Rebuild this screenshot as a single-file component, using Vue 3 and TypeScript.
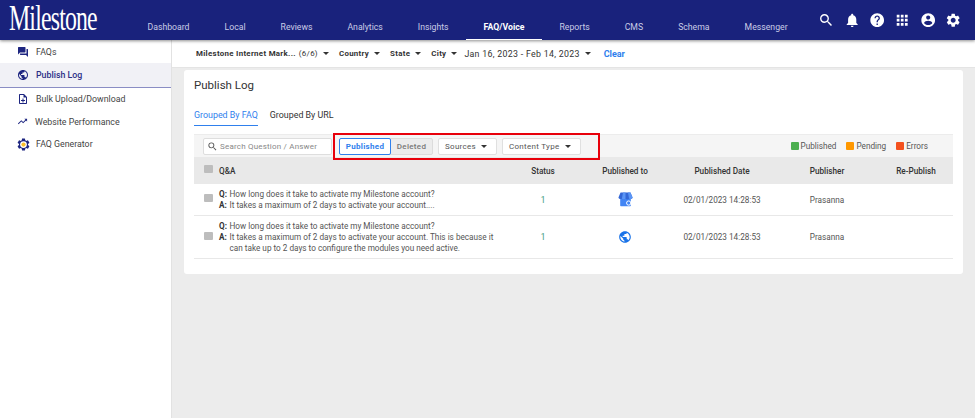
<script setup lang="ts">
const navItems = ['Dashboard', 'Local', 'Reviews', 'Analytics', 'Insights', 'FAQ/Voice', 'Reports', 'CMS', 'Schema', 'Messenger'];
const activeNav = 'FAQ/Voice';

const headerIcons = [
  'M15.5 14h-.79l-.28-.27A6.47 6.47 0 0 0 16 9.5 6.5 6.5 0 1 0 9.5 16c1.61 0 3.09-.59 4.23-1.57l.27.28v.79l5 4.99L20.49 19l-4.99-5zm-6 0C7.01 14 5 11.99 5 9.5S7.01 5 9.5 5 14 7.01 14 9.5 11.99 14 9.5 14z',
  'M12 22c1.1 0 2-.9 2-2h-4c0 1.1.9 2 2 2zm6-6v-5c0-3.07-1.63-5.64-4.5-6.32V4c0-.83-.67-1.5-1.5-1.5s-1.5.67-1.5 1.5v.68C7.64 5.36 6 7.92 6 11v5l-2 2v1h16v-1l-2-2z',
  'M12 2C6.48 2 2 6.48 2 12s4.48 10 10 10 10-4.48 10-10S17.52 2 12 2zm1 17h-2v-2h2v2zm2.07-7.75l-.9.92C13.45 12.9 13 13.5 13 15h-2v-.5c0-1.1.45-2.1 1.17-2.83l1.24-1.26c.37-.36.59-.86.59-1.41 0-1.1-.9-2-2-2s-2 .9-2 2H8c0-2.21 1.79-4 4-4s4 1.79 4 4c0 .88-.36 1.68-.93 2.25z',
  'M4 8h4V4H4v4zm6 12h4v-4h-4v4zm-6 0h4v-4H4v4zm0-6h4v-4H4v4zm6 0h4v-4h-4v4zm6-10v4h4V4h-4zm-6 4h4V4h-4v4zm6 6h4v-4h-4v4zm0 6h4v-4h-4v4z',
  'M12 2C6.48 2 2 6.48 2 12s4.48 10 10 10 10-4.48 10-10S17.52 2 12 2zm0 3c1.66 0 3 1.34 3 3s-1.34 3-3 3-3-1.34-3-3 1.34-3 3-3zm0 14.2c-2.5 0-4.71-1.28-6-3.22.03-1.99 4-3.08 6-3.08 1.99 0 5.97 1.09 6 3.08-1.29 1.94-3.5 3.22-6 3.22z',
  'M19.14 12.94c.04-.3.06-.61.06-.94 0-.32-.02-.64-.07-.94l2.03-1.58a.49.49 0 0 0 .12-.61l-1.92-3.32a.488.488 0 0 0-.59-.22l-2.39.96c-.5-.38-1.03-.7-1.62-.94l-.36-2.54a.484.484 0 0 0-.48-.41h-3.84c-.24 0-.43.17-.47.41l-.36 2.54c-.59.24-1.13.57-1.62.94l-2.39-.96c-.22-.08-.47 0-.59.22L2.74 8.87c-.12.21-.08.47.12.61l2.03 1.58c-.05.3-.09.63-.09.94s.02.64.07.94l-2.03 1.58a.49.49 0 0 0-.12.61l1.92 3.32c.12.22.37.29.59.22l2.39-.96c.5.38 1.03.7 1.62.94l.36 2.54c.05.24.24.41.48.41h3.84c.24 0 .44-.17.47-.41l.36-2.54c.59-.24 1.13-.56 1.62-.94l2.39.96c.22.08.47 0 .59-.22l1.92-3.32c.12-.22.07-.47-.12-.61l-2.01-1.58zM12 15.6c-1.98 0-3.6-1.62-3.6-3.6s1.62-3.6 3.6-3.6 3.6 1.62 3.6 3.6-1.62 3.6-3.6 3.6z',
];

const globePath = 'M12 2C6.48 2 2 6.48 2 12s4.48 10 10 10 10-4.48 10-10S17.52 2 12 2zm-1 17.93c-3.95-.49-7-3.85-7-7.93 0-.62.08-1.21.21-1.79L9 15v1c0 1.1.9 2 2 2v1.93zm6.9-2.54c-.26-.81-1-1.39-1.9-1.39h-1v-3c0-.55-.45-1-1-1H8v-2h2c.55 0 1-.45 1-1V7h2c1.1 0 2-.9 2-2v-.41c2.93 1.19 5 4.06 5 7.41 0 2.08-.8 3.97-2.1 5.39z';

const sideItems = [
  { label: 'FAQs', icon: 'chat' },
  { label: 'Publish Log', icon: 'globe', active: true },
  { label: 'Bulk Upload/Download', icon: 'file' },
  { label: 'Website Performance', icon: 'trend' },
  { label: 'FAQ Generator', icon: 'gear' },
];

const filters = ['Country', 'State', 'City'];
const legend = [
  { label: 'Published', color: '#4caf50' },
  { label: 'Pending', color: '#ff9800' },
  { label: 'Errors', color: '#f4511e' },
];
const columns = ['Status', 'Published to', 'Published Date', 'Publisher', 'Re-Publish'];

const rows = [
  {
    q: 'How long does it take to activate my Milestone account?',
    a: 'It takes a maximum of 2 days to activate your account....',
    target: 'gmb',
  },
  {
    q: 'How long does it take to activate my Milestone account?',
    a: 'It takes a maximum of 2 days to activate your account. This is because it can take up to 2 days to configure the modules you need active.',
    target: 'web',
  },
];
</script>

<template>
  <div class="page">
    <header class="topbar">
      <div class="logo">Milestone</div>
      <nav class="nav">
        <a v-for="item in navItems" :key="item" class="nav__item" :class="{ 'nav__item--active': item === activeNav }">{{ item }}</a>
      </nav>
      <div class="top-icons">
        <svg v-for="(d, i) in headerIcons" :key="i" viewBox="0 0 24 24" class="top-icons__icon"><path :d="d" /></svg>
      </div>
    </header>

    <div class="body">
      <aside class="sidebar">
        <div v-for="item in sideItems" :key="item.label" class="side-item" :class="{ 'side-item--active': item.active }">
          <svg viewBox="0 0 24 24" class="side-item__icon" :class="'side-item__icon--' + item.icon">
            <path v-if="item.icon === 'chat'" d="M21 6h-2v9H6v2c0 .55.45 1 1 1h11l4 4V7c0-.55-.45-1-1-1zm-4 6V3c0-.55-.45-1-1-1H3c-.55 0-1 .45-1 1v14l4-4h10c.55 0 1-.45 1-1z" />
            <path v-else-if="item.icon === 'globe'" :d="globePath" />
            <path v-else-if="item.icon === 'file'" d="M14 2H6c-1.1 0-2 .9-2 2v16c0 1.1.9 2 2 2h12c1.1 0 2-.9 2-2V8l-6-6zm4 18H6V4h7v5h5v11zm-7-1h2v-3h3v-2h-3v-3h-2v3H8v2h3v3z" />
            <path v-else-if="item.icon === 'trend'" d="M16 6l2.29 2.29-4.88 4.88-4-4L2 16.59 3.41 18l6-6 4 4 6.3-6.29L22 12V6z" />
            <template v-else>
              <path :d="headerIcons[5]" />
              <circle cx="12" cy="12" r="5.4" fill="#fff" />
              <circle cx="12" cy="12" r="3.4" fill="#fbc02d" />
            </template>
          </svg>
          <span>{{ item.label }}</span>
        </div>
      </aside>

      <main class="main">
        <div class="filterbar">
          <span class="filter">Milestone Internet Mark...<em>(6/6)</em><i class="caret" /></span>
          <span v-for="f in filters" :key="f" class="filter">{{ f }}<i class="caret" /></span>
          <span class="filter filter--date">Jan 16, 2023 - Feb 14, 2023<i class="caret" /></span>
          <a class="filter__clear">Clear</a>
        </div>

        <section class="card">
          <h1 class="card__title">Publish Log</h1>
          <div class="tabs">
            <span class="tab tab--active">Grouped By FAQ</span>
            <span class="tab">Grouped By URL</span>
          </div>

          <div class="toolbar">
            <label class="search">
              <svg viewBox="0 0 24 24" class="search__icon"><path :d="headerIcons[0]" /></svg>
              <span>Search Question / Answer</span>
            </label>
            <div class="highlight">
              <div class="segment">
                <span class="segment__btn segment__btn--on">Published</span>
                <span class="segment__btn">Deleted</span>
              </div>
              <span class="dropdown dropdown--sources">Sources<i class="caret" /></span>
              <span class="dropdown dropdown--type">Content Type<i class="caret" /></span>
            </div>
            <div class="legend">
              <span v-for="l in legend" :key="l.label" class="legend__item">
                <i class="legend__dot" :style="{ background: l.color }" />{{ l.label }}
              </span>
            </div>
          </div>

          <div class="grid grid--head">
            <div class="qa"><i class="check" /><span>Q&amp;A</span></div>
            <div v-for="c in columns" :key="c" class="cell">{{ c }}</div>
          </div>

          <div v-for="(row, i) in rows" :key="i" class="grid grid--row">
            <div class="qa">
              <i class="check" />
              <div class="qa__text">
                <div class="qa__line"><b>Q:</b><span>{{ row.q }}</span></div>
                <div class="qa__line"><b>A:</b><span>{{ row.a }}</span></div>
              </div>
            </div>
            <div class="cell cell--status">1</div>
            <div class="cell">
              <svg v-if="row.target === 'gmb'" viewBox="0 0 24 24" class="target target--gmb">
                <path d="M4.5 9h15v11.5a1 1 0 0 1-1 1h-13a1 1 0 0 1-1-1z" fill="#4285f4" />
                <path d="M5 2h14l3 7a3 3 0 0 1-5 1.5A3 3 0 0 1 12 10.5 3 3 0 0 1 7 10.5 3 3 0 0 1 2 9z" fill="#3367d6" />
                <path d="M8.5 2h3.5v8.5A3 3 0 0 1 7 10.5zM15.5 2H19l3 7a3 3 0 0 1-5 1.5z" fill="#5a95f5" />
                <circle cx="16.5" cy="17" r="3" fill="none" stroke="#fff" stroke-width="1.4" />
              </svg>
              <svg v-else viewBox="0 0 24 24" class="target target--web"><path :d="globePath" /></svg>
            </div>
            <div class="cell">02/01/2023 14:28:53</div>
            <div class="cell">Prasanna</div>
            <div class="cell"></div>
          </div>
        </section>
      </main>
    </div>
  </div>
</template>

<style>
html,
body {
  margin: 0;
  background: #ececec;
}
</style>

<style scoped>
.page {
  width: 975px;
  height: 418px;
  overflow: hidden;
  display: flex;
  flex-direction: column;
  font-family: Roboto, "Liberation Sans", sans-serif;
  color: #444;
}

.topbar {
  height: 40px;
  flex: none;
  display: flex;
  background: #19227c;
  box-shadow: 0 1px 3px rgba(0, 0, 0, 0.45);
  position: relative;
  z-index: 2;
}

.logo {
  width: 130px;
  flex: none;
  padding-left: 9px;
  box-sizing: border-box;
  font-family: "Liberation Serif", serif;
  font-size: 35px;
  line-height: 38px;
  color: #fff;
  letter-spacing: -1.2px;
  transform-origin: 9px 50%;
  transform: scaleX(0.68);
  white-space: nowrap;
}

.nav {
  display: flex;
  height: 40px;
}

.nav__item {
  padding: 21px 17.5px 0;
  box-sizing: border-box;
  font-size: 8.7px;
  line-height: 13px;
  color: #c9cce6;
}

.nav__item--active {
  color: #fff;
  font-weight: 700;
  border-bottom: 1px solid #fff;
}

.top-icons {
  margin-left: auto;
  padding: 11.5px 13.5px 0 0;
  display: flex;
  gap: 9px;
}

.top-icons__icon {
  width: 16.4px;
  height: 16.4px;
  fill: #fff;
}

.body {
  flex: 1;
  display: flex;
  min-height: 0;
}

.sidebar {
  width: 172px;
  flex: none;
  background: #fff;
  border-right: 1px solid #e2e2e2;
  box-sizing: border-box;
}

.side-item {
  height: 22.5px;
  display: flex;
  align-items: center;
  gap: 7px;
  padding-left: 17px;
  font-size: 8.8px;
  color: #444;
}

.side-item:first-child {
  height: 23px;
}

.side-item--active {
  height: 24px;
  background: #f1f1f6;
  border-bottom: 1px solid #8a8dc4;
  color: #2c2f86;
  font-weight: 500;
}

.side-item__icon {
  width: 12px;
  height: 12px;
  fill: #1d2580;
  flex: none;
}

.side-item__icon--trend {
  width: 11px;
  height: 11px;
}

.side-item__icon--gear {
  width: 15px;
  height: 15px;
  margin: 0 -1.5px;
}

.main {
  flex: 1;
  min-width: 0;
}

.filterbar {
  height: 28px;
  background: #fff;
  border-bottom: 1px solid #e4e4e4;
  box-sizing: border-box;
  display: flex;
  align-items: center;
  padding: 0 0 0 24px;
  font-size: 7.9px;
  color: #333;
}

.filter {
  font-weight: 700;
  letter-spacing: 0.3px;
  margin-right: 10px;
  display: inline-flex;
  align-items: center;
  white-space: nowrap;
}

.filter em {
  font-style: normal;
  font-weight: 400;
  margin-left: 3px;
}

.filter:nth-child(4) {
  margin-right: 7px;
}

.filter--date {
  font-weight: 400;
  font-size: 8.8px;
  letter-spacing: 0.3px;
  margin-right: 0;
}

.filter__clear {
  margin-left: 13px;
  color: #2f80ed;
  font-weight: 700;
  font-size: 9px;
}

.caret {
  display: inline-block;
  width: 0;
  height: 0;
  margin-left: 5px;
  border-left: 3px solid transparent;
  border-right: 3px solid transparent;
  border-top: 3px solid #333;
}

.card {
  width: 779px;
  height: 204px;
  margin: 2px 0 0 12px;
  padding: 7px 10px 0;
  box-sizing: border-box;
  background: #fff;
  border-radius: 3px;
}

.card__title {
  margin: 0;
  font-size: 11.5px;
  line-height: 16px;
  font-weight: 400;
  color: #333;
}

.tabs {
  margin-top: 16px;
  display: flex;
  gap: 12px;
  font-size: 8.9px;
  line-height: 12px;
}

.tab {
  padding-bottom: 4px;
  color: #333;
}

.tab--active {
  color: #2f80ed;
  border-bottom: 1.5px solid #2f80ed;
}

.toolbar {
  margin-top: 8px;
  height: 23px;
  display: flex;
  align-items: center;
  padding-left: 9px;
  background: #f5f5f5;
  border-top: 1px solid #ececec;
  box-sizing: border-box;
  font-size: 8px;
}

.search {
  width: 129px;
  height: 17px;
  box-sizing: border-box;
  display: flex;
  align-items: center;
  gap: 2px;
  padding-left: 3px;
  background: #fff;
  border: 1px solid #dedede;
  border-radius: 2px;
  color: #888;
  letter-spacing: 0.2px;
  white-space: nowrap;
  overflow: hidden;
}

.search__icon {
  width: 11px;
  height: 11px;
  fill: #555;
  flex: none;
}

.highlight {
  margin-left: 1px;
  height: 27px;
  box-sizing: border-box;
  width: 267px;
  padding-left: 4px;
  display: flex;
  align-items: center;
  gap: 5px;
  border: 2px solid #e8000b;
  position: relative;
  z-index: 1;
}

.segment {
  display: flex;
  height: 17px;
  border-radius: 2px;
  background: #ececec;
  border: 1px solid #dcdcdc;
  box-sizing: border-box;
}

.segment__btn {
  width: 41px;
  font-size: 8px;
  line-height: 15px;
  text-align: center;
  font-weight: 500;
  color: #777;
  letter-spacing: 0.3px;
}

.segment__btn--on {
  width: 52px;
  box-sizing: border-box;
  margin: -1px 0 -1px -1px;
  background: #fff;
  border: 1px solid #2f80ed;
  border-radius: 2px;
  color: #2f80ed;
  font-weight: 700;
}

.dropdown {
  height: 17px;
  box-sizing: border-box;
  display: flex;
  align-items: center;
  padding-left: 6px;
  background: #fff;
  border: 1px solid #e0e0e0;
  border-radius: 2px;
  color: #555;
  letter-spacing: 0.3px;
}

.dropdown--sources {
  width: 59px;
}

.dropdown--type {
  width: 79px;
}

.legend {
  margin-left: auto;
  padding-right: 25px;
  display: flex;
  gap: 10px;
  font-size: 8.2px;
  color: #555;
}

.legend__item {
  display: inline-flex;
  align-items: center;
  gap: 2px;
}

.legend__dot {
  width: 8px;
  height: 8px;
  border-radius: 1px;
}

.grid {
  display: grid;
  grid-template-columns: 321px 56px 108px 86px 124px 54px;
  padding-right: 10px;
  font-size: 8.2px;
  color: #555;
}

.grid--head {
  height: 27px;
  background: #e9e9e9;
  align-items: center;
  font-weight: 500;
  color: #333;
}

.grid--row {
  align-items: center;
  height: 32px;
  border-bottom: 1px solid #e8e8e8;
  box-sizing: border-box;
}

.grid--row + .grid--row {
  height: 43px;
}

.qa {
  display: flex;
  align-items: center;
  gap: 6px;
  padding-left: 10px;
}

.check {
  width: 9px;
  height: 8px;
  margin-top: -3px;
  border-radius: 1px;
  background: #bdbdbd;
  flex: none;
}

.qa__text {
  width: 279px;
  line-height: 11px;
}

.qa__line {
  display: flex;
  gap: 2px;
}

.qa__line b {
  font-weight: 700;
  color: #333;
  flex: none;
  width: 8.5px;
}

.cell {
  text-align: center;
  white-space: nowrap;
}

.cell--status {
  color: #3c9a78;
}

.target {
  display: block;
  margin: 0 auto;
}

.target--gmb {
  width: 17px;
  height: 17px;
}

.target--web {
  width: 14px;
  height: 14px;
  fill: #1a73e8;
}
</style>
